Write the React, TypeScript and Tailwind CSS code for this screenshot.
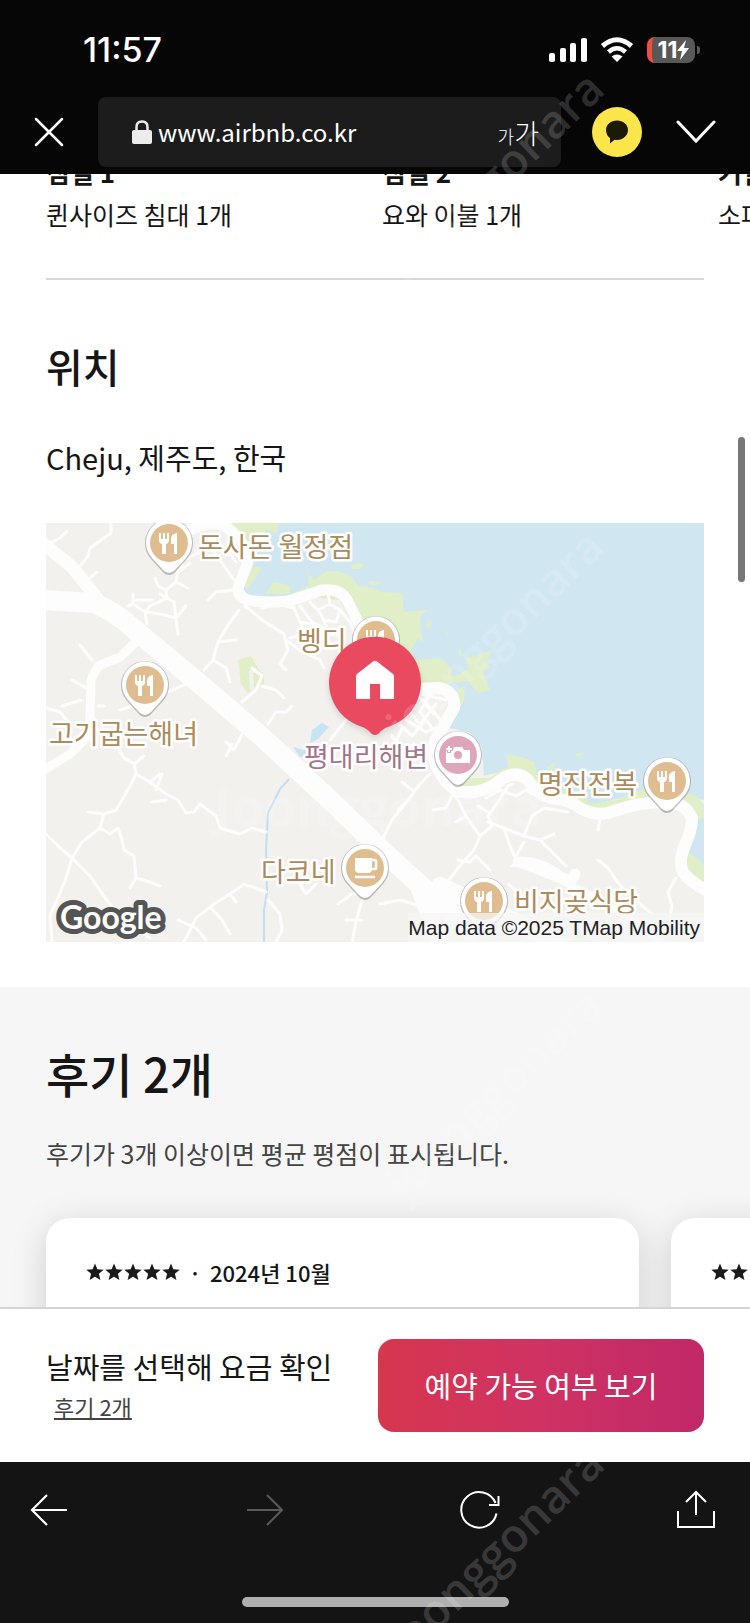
import React from 'react';

const rooms = [
  { title: '침실 1', description: '퀸사이즈 침대 1개' },
  { title: '침실 2', description: '요와 이불 1개' },
  { title: '거실', description: '소파베드 1개' },
];

const reviews = [
  { id: 1, rating: 5, date: '2024년 10월' },
  { id: 2, rating: 5, date: '2024년 9월' },
];

interface Place {
  name: string;
  kind: 'food' | 'cafe' | 'photo';
  pin: [number, number];
  label: [number, number];
}

const places: Place[] = [
  { name: '돈사돈 월정점', kind: 'food', pin: [169, 543], label: [198, 557] },
  { name: '벵디', kind: 'food', pin: [376, 640], label: [297, 651] },
  { name: '고기굽는해녀', kind: 'food', pin: [145, 685], label: [49, 744] },
  { name: '평대리해변', kind: 'photo', pin: [458, 755], label: [304, 767] },
  { name: '명진전복', kind: 'food', pin: [667, 781], label: [538, 794] },
  { name: '다코네', kind: 'cafe', pin: [365, 868], label: [261, 882] },
  { name: '비지곶식당', kind: 'food', pin: [484, 901], label: [514, 912] },
];

const smallRoads = [
  'M111 523V533L90 548L88 556L80 566',
  'M46 545L60 538L67 531M90 578L97 572',
  'M190 563L178 572L176 582L166 590L167 598L150 606L145 612L147 624',
  'M166 590L158 586L155 578M145 612L133 604L128 606M133 604V594M176 582L188 588M178 572L184 560L200 552',
  'M147 612L160 614L176 618L186 606M176 618L178 634M160 594L174 602L176 618M136 600L152 600',
  'M205 540L217 556L234 580M226 548L236 562M234 590L216 592L208 600',
  'M239 610L228 625L218 642L213 660L204 670M218 642L236 640M213 660L226 668L230 682',
  'M245 606L262 620L284 634L288 650L280 664L286 670',
  'M262 608L276 604L294 608L300 622L320 626M294 608L290 600M300 622L306 634L290 638',
  'M310 602L318 610L330 604L340 610L336 622L324 620L318 610M330 604L328 594M340 610L350 622L358 640M324 620L328 634L344 636M300 606L312 622L330 632',
  'M286 640L300 650L320 660L324 668',
  'M242 702L256 690L262 676L252 668M262 686L276 690L284 698',
  'M268 724L276 712L286 712L292 706M330 740L346 720L356 710',
  'M120 710L150 700L186 684M80 645L92 660M72 680L90 690M46 708L60 712L70 724M62 706L82 700M98 706L104 706',
  'M118 748L124 758L134 764L136 774L130 786L122 800L116 810L104 814L100 828L82 842L72 858L66 878L58 898L50 915L52 942',
  'M136 774L150 782L166 794L178 800L186 813L194 812L200 804L216 816L220 828L240 834L252 828L266 832',
  'M134 764L144 756M150 782L160 774M156 790L162 774M166 800L152 802',
  'M104 814L88 812M100 828L110 834L118 828L122 840L124 850L134 856L136 878L130 888M136 878L150 882L160 886',
  'M46 834L58 846L72 858L90 876L108 902L124 918L150 938',
  'M266 892L244 884L230 894L214 904L196 918L184 942M230 894L236 902M212 909L222 920L230 934M178 920L196 928L206 940',
  'M268 900L280 914L282 930L276 942M300 884L306 894L316 884M338 904L352 894L362 892M362 900L356 922L352 942M346 920L362 920',
  'M226 742L234 750L242 734L246 730M226 756L232 744',
  'M384 722L400 702L414 692L430 696L446 700M400 702L420 724L436 704M414 692L434 714M390 714L412 736L424 722M402 728L396 742L410 754L430 748',
  'M424 700L442 722M430 694L420 712L432 728M406 720L426 732L440 726M392 736L404 752L414 744',
  'M382 840L392 820L408 800L420 784L430 774M402 782L412 790M408 800L398 810',
  'M446 784L458 800L466 816L480 836L474 850L458 868L446 884M433 810L446 808L452 796M466 816L456 822M480 836L492 826L488 816L498 802L508 786L512 784',
  'M486 798L500 790L516 796L526 790L532 794M500 790L496 780M488 822L504 828L510 846L518 864L512 866M488 812L478 806',
  'M504 828L524 836L540 840L556 856L566 866M524 836L532 816L544 808L568 812M516 856L524 842M540 840L554 834',
  'M458 860L470 862L476 856L490 870M508 884L520 894M598 860L608 868L616 880L626 892L640 904L652 914',
  'M600 818L598 830M676 878L668 892L672 906L668 926M440 900L420 906L400 900L380 904',
];

const PlaceIcon: React.FC<{ kind: Place['kind'] }> = ({ kind }) => {
  if (kind === 'cafe') {
    return (
      <g>
        <path d="M-10 -10H7V1Q7 5 3 5H-6Q-10 5 -10 1Z" fill="white" />
        <path d="M7 -8H10Q11 -8 11 -7V0Q11 1 10 1H7" fill="none" stroke="white" strokeWidth="2.5" />
        <path d="M-10 9H10" stroke="white" strokeWidth="2.5" />
      </g>
    );
  }
  if (kind === 'photo') {
    return (
      <g>
        <path d="M-12 -5H-5L-4 -8H4L6 -5H12V8H-12Z" fill="white" />
        <circle cx="0" cy="0" r="4" fill="#dfa5bb" />
        <path d="M-9 -10V-2M-13 -6H-5" stroke="#dfa5bb" strokeWidth="4" />
        <path d="M-9 -9V-3M-12 -6H-6" stroke="white" strokeWidth="2" />
      </g>
    );
  }
  return (
    <g fill="white">
      <path d="M-10 -10H-8V-4H-6V-10H-4V-4H-2V-10H0V-3Q0 0 -3 1V11H-7V1Q-10 0 -10 -3Z" />
      <path d="M8 -10V11H5V1H2V-4Q2 -9 8 -10Z" />
    </g>
  );
};

const LocationMap: React.FC = () => (
  <svg
    viewBox="46 523 658 419"
    preserveAspectRatio="xMidYMid slice"
    className="block w-full h-[419px]"
    role="img"
    aria-label="숙소 위치 지도"
  >
    <rect x="46" y="523" width="658" height="419" fill="#f2f1ee" />

    {/* Sea */}
    <path
      d="M232 523L246 540L252 560L242 588L250 597H290L320 586L345 592L362 618L380 640L420 680L440 685L458 700L450 728L470 733L482 748L484 776L513 768L545 790L590 806L650 790L704 800V523Z"
      fill="#d0e6f1"
    />
    <path d="M704 816L696 820L688 857L704 870Z" fill="#d0e6f1" />

    {/* Coastal green */}
    <g fill="#e0efc8">
      <path d="M232 523H279L276 533L266 530L262 542L252 535L250 548L240 540Z" />
      <path d="M252 568L261 566L258 574L247 590L244 586Z" />
      <path d="M265 594L274 582L284 584L291 586L289 594Z" />
      <path d="M289 594L304 589L309 584L307 572L314 580L326 571L338 571L352 577L358 586L374 588L380 592L402 593L404 612L427 610L421 616L420 628L424 644L418 638L411 650L416 660L440 658L449 665L454 680L440 692L400 692L360 640L340 600Z" />
      <path d="M351 565L358 563L366 564L360 569L352 569ZM368 581L381 582L378 585H370ZM427 622L432 619L431 626L426 629ZM445 634L448 630L447 636Z" />
      <path d="M452 677L468 670L467 658L480 654L492 650L486 663L490 667L483 672L490 690L478 693L468 681L454 683Z" />
      <path d="M458 690L465 686L464 700L459 709L454 700ZM458 645L462 654H466L460 657Z" />
      <path d="M453 778L490 778L500 770L508 768L506 754L522 757L534 762L537 773L543 781L560 790L580 794L592 804L616 800L634 792L648 788L656 800L590 812L540 800L514 770L480 796L450 790Z" />
      <path d="M684 792L697 796L704 805V818L696 820L682 804Z" />
      <path d="M690 853L704 865V882L688 873L685 860Z" />
      <path d="M545 768L556 762L553 770ZM574 754L586 752L580 757Z" />
      <path d="M238 660L251 656L258 668L264 676V685L254 688L248 693L241 684Z" />
      <path d="M570 942L580 934L594 942Z" />
    </g>
    <path d="M252 690L251 672L256 670" fill="none" stroke="#f2f1ee" strokeWidth="4" />

    {/* Inland water */}
    <path d="M312 730L322 723L329 727L318 739L310 743ZM293 747L304 750L310 745L308 756L300 757Z" fill="#c8e3f2" />
    <path d="M289 779L280 789L268 813L266 850L267 892L264 910V942" fill="none" stroke="#c0e0f1" strokeWidth="2" />

    {/* Roads */}
    <g fill="none" stroke="#fdfdfd" strokeLinecap="round" strokeLinejoin="round">
      <g strokeWidth="3">
        {smallRoads.map((d) => (
          <path key={d} d={d} />
        ))}
      </g>
      <path d="M40 541L72 567L97 598" strokeWidth="13" />
      <path d="M136 642L120 657L98 666L91 680L90 718L88 736L70 754L44 770" strokeWidth="9" />
      <path
        d="M180 534L200 526Q218 520 230 530Q248 545 248 562L238 588Q238 600 254 601Q284 604 298 598L322 590Q340 588 347 600L362 630"
        strokeWidth="11"
      />
      <path
        d="M418 689L440 688Q456 692 454 708L440 732Q430 745 436 765Q448 790 462 792Q482 794 498 782Q515 768 528 780Q538 796 552 798Q570 800 580 808Q598 818 614 811Q640 802 665 802Q685 802 692 818Q692 830 685 845Q678 862 683 872Q690 882 706 890"
        strokeWidth="12"
      />
      <path d="M518 862Q540 862 556 874T575 874" strokeWidth="11" />
      <path d="M520 864L560 880L600 900L640 925L660 942" strokeWidth="7" />
      <path d="M40 600L94 603Q116 612 135 630L200 684L262 737L330 800L388 856L470 930" strokeWidth="20" />
      <path d="M418 884L440 942M440 886L520 924L560 945" strokeWidth="18" />
    </g>

    {/* Places */}
    {places.map(({ name, kind, pin, label }) => (
      <g key={name}>
        <g transform={`translate(${pin[0]} ${pin[1]})`}>
          <path
            d="M0 32Q-4 32 -7 28L-18 16A24 24 0 1 1 18 16L7 28Q4 32 0 32Z"
            fill="#8e8a92"
            opacity="0.55"
          />
          <path d="M0 30Q-3 30 -6 27L-17 15A23 23 0 1 1 17 15L6 27Q3 30 0 30Z" fill="white" />
          <circle r="19" fill={kind === 'photo' ? '#dfa5bb' : '#dfbd90'} />
          <PlaceIcon kind={kind} />
        </g>
        <text
          x={label[0]}
          y={label[1]}
          fill={kind === 'photo' ? '#a4748b' : '#ab8b5c'}
          stroke="white"
          strokeWidth="5"
          strokeLinejoin="round"
          paintOrder="stroke"
          className="text-[27px]"
        >
          {name}
        </text>
      </g>
    ))}

    {/* Home marker */}
    <path
      d="M375 735Q372 735 369 731Q364 727 357 725A46 46 0 1 1 393 725Q386 727 381 731Q378 735 375 735Z"
      fill="#ea4a60"
      className="drop-shadow-md"
    />
    <path
      d="M373 661.500Q375 660 377 661.500L393 674Q394 675 394 676V698Q394 699 393 699H380V684H370V699H357Q356 699 356 698V676Q356 675 357 674Z"
      fill="white"
    />

    <text
      x="60"
      y="929"
      fill="white"
      stroke="#555555"
      strokeWidth="10"
      strokeLinejoin="round"
      paintOrder="stroke"
      className="font-['Lato',sans-serif] text-[32px] font-bold"
    >
      Google
    </text>

    <rect x="408" y="913" width="296" height="29" fill="#f5f5f5" opacity="0.75" />
    <text
      x="700"
      y="935"
      textAnchor="end"
      fill="#222222"
      className="font-['Liberation_Sans',sans-serif] text-[21px]"
    >
      Map data ©2025 TMap Mobility
    </text>
  </svg>
);

const Stars: React.FC<{ rating: number }> = ({ rating }) => (
  <div className="flex shrink-0 gap-px" role="img" aria-label={`별점 ${rating}점`}>
    {Array.from({ length: rating }, (_, i) => (
      <svg key={i} viewBox="0 0 18 18" className="w-[18px] h-[18px]" fill="#1a1a1a">
        <path d="M9 0.500L11.400 6.300L17.700 6.700L12.900 10.800L14.400 17L9 13.700L3.600 17L5.100 10.800L0.300 6.700L6.600 6.300Z" />
      </svg>
    ))}
  </div>
);

const StatusBar: React.FC = () => (
  <div className="flex items-center justify-between pl-[83px] pr-[50px] pt-[30px]">
    <span className="font-['Inter',sans-serif] text-[34px] leading-10 font-medium">11:57</span>
    <div className="flex items-center gap-[13px]">
      <svg viewBox="0 0 38 26" className="w-[38px] h-[26px]" fill="white">
        <rect x="0" y="16" width="6" height="9" rx="2" />
        <rect x="11" y="11" width="6" height="14" rx="2" />
        <rect x="21" y="6" width="6" height="19" rx="2" />
        <rect x="32" y="1" width="6" height="24" rx="2" />
      </svg>
      <svg viewBox="0 0 34 26" className="w-[34px] h-[26px]" fill="none">
        <path d="M2.500 9Q17 -3.500 31.500 9" stroke="white" strokeWidth="5" />
        <path d="M8.500 15Q17 7.500 25.500 15" stroke="white" strokeWidth="4.500" />
        <path d="M17 25L11.500 19.500Q17 15.500 22.500 19.500Z" fill="white" />
      </svg>
      <div className="flex items-center gap-[2px]">
        <div className="flex h-[26px] w-[48px] items-center justify-center rounded-lg border-l-[5px] border-[#f04e3e] bg-[#585858] font-['Inter',sans-serif] text-[23px] leading-none font-bold">
          11
          <svg viewBox="0 0 12 20" className="w-[12px] h-[20px]" fill="white">
            <path d="M9 0L0 11H5L3 20L12 8H7Z" />
          </svg>
        </div>
        <div className="h-2 w-[3px] rounded-r-full bg-[#585858]" />
      </div>
    </div>
  </div>
);

const BrowserHeader: React.FC = () => (
  <header className="shrink-0 bg-[#060606] pb-[7px] text-white">
    <StatusBar />
    <div className="mt-[27px] flex items-center px-[34px]">
      <button type="button" aria-label="닫기">
        <svg viewBox="0 0 30 30" className="w-[30px] h-[30px]" fill="none" stroke="white" strokeWidth="2.500" strokeLinecap="round">
          <path d="M2 2L28 28M28 2L2 28" />
        </svg>
      </button>
      <div className="ml-[34px] flex h-[70px] flex-1 items-center rounded-lg bg-[#1c1c1c] pr-[22px] pl-[34px]">
        <svg viewBox="0 0 20 24" className="mr-[6px] w-5 h-6 shrink-0">
          <path d="M4.500 11V7Q4.500 1.500 10 1.500T15.500 7V11" fill="none" stroke="#ececec" strokeWidth="2.500" />
          <rect x="0" y="10" width="20" height="14" rx="2" fill="#ececec" />
        </svg>
        <input
          type="text"
          readOnly
          aria-label="주소"
          value="www.airbnb.co.kr"
          className="w-0 flex-1 bg-transparent text-[24px] outline-none"
        />
        <button type="button" aria-label="글자 크기" className="flex items-baseline leading-none font-light">
          <span className="text-[18px]">가</span>
          <span className="text-[27px]">가</span>
        </button>
      </div>
      <button
        type="button"
        aria-label="카카오톡 공유"
        className="ml-[31px] flex h-[50px] w-[50px] items-center justify-center rounded-full bg-[#fae54b]"
      >
        <svg viewBox="0 0 24 24" className="w-6 h-6" fill="#1c1a05">
          <path d="M12 0.500C18 0.500 23 4.500 23 10S18 20 12 20Q10.500 20 9.500 19.700L5 23.500V18Q1 15 1 10C1 4.500 6 0.500 12 0.500Z" />
        </svg>
      </button>
      <button type="button" aria-label="더 보기" className="ml-[34px]">
        <svg viewBox="0 0 40 24" className="w-10 h-6" fill="none" stroke="white" strokeWidth="3" strokeLinecap="round">
          <path d="M2 2L20 21L38 2" />
        </svg>
      </button>
    </div>
  </header>
);

const BookingBar: React.FC = () => (
  <div className="flex shrink-0 items-center justify-between border-t-2 border-[#d4d4d4] bg-white px-[46px] py-[30px]">
    <div>
      <p className="text-[29px] leading-10">날짜를 선택해 요금 확인</p>
      <a href="#reviews" className="ml-2 block text-[22px] leading-10 text-[#444444] underline underline-offset-2">
        후기 2개
      </a>
    </div>
    <button
      type="button"
      className="h-[93px] w-[326px] rounded-2xl bg-linear-to-r from-[#d7364e] via-[#cf3263] to-[#c02867] text-[29px] text-white"
    >
      예약 가능 여부 보기
    </button>
  </div>
);

const Toolbar: React.FC = () => (
  <footer className="shrink-0 bg-[#141414] pb-4">
    <nav className="flex items-center justify-between pt-7 pr-[34px] pl-[29px]" aria-label="브라우저 도구">
      <button type="button" aria-label="뒤로">
        <svg viewBox="0 0 40 40" className="w-10 h-10" fill="none" stroke="white" strokeWidth="2.200">
          <path d="M38 20H3M18 5L3 20L18 35" />
        </svg>
      </button>
      <button type="button" aria-label="앞으로" disabled>
        <svg viewBox="0 0 40 40" className="w-10 h-10" fill="none" stroke="#5a5a5a" strokeWidth="2">
          <path d="M2 20H37M22 5L37 20L22 35" />
        </svg>
      </button>
      <button type="button" aria-label="새로고침">
        <svg viewBox="0 0 40 40" className="w-10 h-10" fill="none" stroke="white" strokeWidth="2">
          <path d="M36.500 23.500A17.800 17.800 0 1 1 35.500 13M38.500 6V15H29" />
        </svg>
      </button>
      <button type="button" aria-label="공유">
        <svg viewBox="0 0 40 40" className="w-10 h-10" fill="none" stroke="white" strokeWidth="2">
          <path d="M2 21V37H38V21M20 25V2M10 12L20 2L30 12" />
        </svg>
      </button>
    </nav>
    <div className="mx-auto mt-[67px] h-[10px] w-[267px] rounded-full bg-[#b0b0b0]" />
  </footer>
);

// Repeated diagonal mark laid over the whole page
const Watermark: React.FC = () => (
  <svg
    className="pointer-events-none absolute inset-0 h-full w-full font-['Open_Sans',sans-serif]"
    fill="white"
    fillOpacity="0.17"
    aria-hidden="true"
  >
    {[92, 550, 1008, 1467].map((y) => (
      <text key={y} transform={`translate(607 ${y}) rotate(-44)`} textAnchor="end" className="text-[46px] font-semibold">
        joonggonara
      </text>
    ))}
    <text x="378" y="826" textAnchor="middle" className="text-[52px] font-bold">
      Joonggonara
    </text>
  </svg>
);

const App: React.FC = () => (
  <div className="relative flex h-screen flex-col overflow-hidden bg-white font-['Noto_Sans_CJK_KR',sans-serif] text-[#161616]">
    <BrowserHeader />

    <main className="min-h-0 flex-1 overflow-hidden">
      {/* Rooms */}
      <section className="overflow-hidden px-[46px]">
        <ul className="-mt-5 flex gap-8 pb-[46px]">
          {rooms.map((room) => (
            <li key={room.title} className="w-[304px] shrink-0">
              <h3 className="text-[26px] leading-9 font-bold">{room.title}</h3>
              <p className="mt-[6px] text-[25px] leading-9">{room.description}</p>
            </li>
          ))}
        </ul>
      </section>

      {/* Location */}
      <section className="px-[46px] pb-[45px]">
        <div className="h-[2px] bg-[#d6d6d6]" />
        <h2 className="mt-[62px] text-[40px] leading-[48px] font-medium">위치</h2>
        <p className="mt-[47px] mb-[46px] text-[29px] leading-10">Cheju, 제주도, 한국</p>
        <LocationMap />
      </section>

      {/* Reviews */}
      <section id="reviews" className="bg-[#f6f6f6] px-[46px] pt-[58px]">
        <h2 className="text-[47px] leading-[56px] font-medium">후기 2개</h2>
        <p className="mt-[34px] text-[25px] leading-9 text-[#444444]">후기가 3개 이상이면 평균 평점이 표시됩니다.</p>
        <div className="mt-[47px] flex gap-8">
          {reviews.map((review) => (
            <article
              key={review.id}
              className="h-[300px] w-[593px] shrink-0 rounded-3xl bg-white px-10 pt-9 shadow-[0_8px_36px_rgba(0,0,0,0.16)]"
            >
              <div className="flex items-center text-[22px] leading-9 font-medium">
                <Stars rating={review.rating} />
                <span className="w-[30px] text-center">·</span>
                <span>{review.date}</span>
              </div>
            </article>
          ))}
        </div>
      </section>
    </main>

    <BookingBar />
    <Toolbar />

    {/* Scroll position */}
    <div className="absolute top-[437px] right-[5px] h-[145px] w-[7px] rounded-full bg-[#777777]" />
    <Watermark />
  </div>
);

export default App;
